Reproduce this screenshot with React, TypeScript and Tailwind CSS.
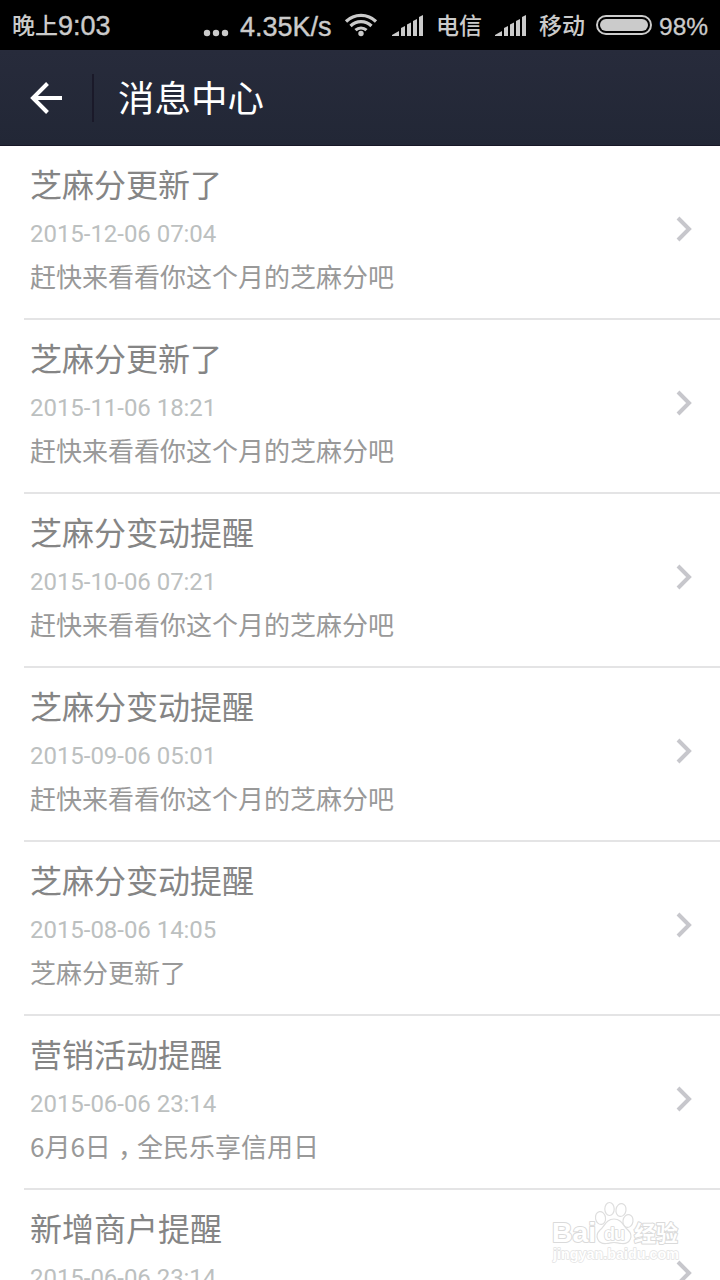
import React from 'react';

interface Message {
  title: string;
  time: string;
  body: React.ReactNode;
}

const reminder = '赶快来看看你这个月的芝麻分吧';

const messages: Message[] = [
  { title: '芝麻分更新了', time: '2015-12-06 07:04', body: reminder },
  { title: '芝麻分更新了', time: '2015-11-06 18:21', body: reminder },
  { title: '芝麻分变动提醒', time: '2015-10-06 07:21', body: reminder },
  { title: '芝麻分变动提醒', time: '2015-09-06 05:01', body: reminder },
  { title: '芝麻分变动提醒', time: '2015-08-06 14:05', body: '芝麻分更新了' },
  {
    title: '营销活动提醒',
    time: '2015-06-06 23:14',
    body: (
      <>
        6月6日
        <span className="mr-[6px] ml-[7px] inline-block w-[13px] [font-feature-settings:'halt']">，</span>
        全民乐享信用日
      </>
    ),
  },
  { title: '新增商户提醒', time: '2015-06-06 23:14', body: '' },
];

const SignalIcon: React.FC = () => (
  <svg className="h-[22px] w-[31px] shrink-0" viewBox="0 0 31 22" fill="#cbcbcb">
    <path d="M0 22v-1l7-4v5z" />
    <path d="M9 22v-8l4-2v10z" />
    <path d="M15 22V10.500l4-2V22z" />
    <path d="M21 22V7l4-2v17z" />
    <path d="M27 22V3l4-2v21z" />
  </svg>
);

const WifiIcon: React.FC = () => (
  <svg className="h-[24px] w-[34px] shrink-0" viewBox="0 0 34 24" fill="none" stroke="#cbcbcb" strokeWidth="3.200">
    <path d="M2 8.500a21.500 21.500 0 0 1 30 0" />
    <path d="M6.500 13a15 15 0 0 1 21 0" />
    <path d="M11.500 17.200a8 8 0 0 1 11 0" />
    <circle cx="17" cy="20.500" r="2.700" fill="#cbcbcb" stroke="none" />
  </svg>
);

const StatusBar: React.FC = () => (
  <div className="flex h-[50px] shrink-0 items-center bg-black pl-3 font-['Liberation_Sans','Noto_Sans_CJK_SC',sans-serif] text-[24px] leading-[50px] whitespace-nowrap text-[#cbcbcb]">
    <div className="flex w-[191px] items-center">
      <span className="pt-[2px] text-[23px] font-medium">晚上</span>
      <span className="pt-[2px] text-[27px] [-webkit-text-stroke:0.4px_#cbcbcb]">9:03</span>
    </div>
    <svg className="mt-4 h-[8px] w-[26px] shrink-0" viewBox="0 0 26 8" fill="#cbcbcb">
      <circle cx="4" cy="4" r="3.200" />
      <circle cx="13" cy="4" r="3.200" />
      <circle cx="22" cy="4" r="3.200" />
    </svg>
    <span className="ml-[11px] w-[104px] pt-[3px] text-[27px] [-webkit-text-stroke:0.4px_#cbcbcb]">4.35K/s</span>
    <WifiIcon />
    <div className="ml-[14px] flex"><SignalIcon /></div>
    <span className="ml-[13px] w-[59px] pt-[2px] text-[23px] font-medium">电信</span>
    <SignalIcon />
    <span className="ml-[13px] w-[57px] pt-[2px] text-[23px] font-medium">移动</span>
    <div className="h-5 w-14 shrink-0 rounded-full border-2 border-[#cbcbcb] p-[2px]">
      <div className="h-full rounded-full bg-[#cbcbcb]" />
    </div>
    <span className="ml-[7px] pt-[3px] text-[24.500px] [-webkit-text-stroke:0.3px_#cbcbcb]">98%</span>
  </div>
);

const Header: React.FC = () => (
  <header className="flex h-24 shrink-0 items-center border-b border-[#171727] bg-linear-to-b from-[#272b3b] to-[#222736] text-white">
    <svg className="ml-[30px] h-8 w-8" viewBox="0 0 32 32" fill="none" stroke="currentColor" strokeWidth="4">
      <path d="M17.500 1.500 3 16l14.500 14.500M3 16h29" />
    </svg>
    <div className="ml-[30px] h-12 w-[2px] bg-[#1a1929]" />
    <h1 className="ml-[24px] pb-[2px] text-[36.500px] leading-[48px]">消息中心</h1>
  </header>
);

const MessageRow: React.FC<{ message: Message }> = ({ message }) => (
  <li className="ml-6 flex h-[174px] shrink-0 items-start justify-between border-b-2 border-[#e4e4e5] pl-[6px]">
    <div className="pt-[14px]">
      <h2 className="text-[32px] leading-[46px] text-[#858585]">{message.title}</h2>
      <p className="mt-[10px] font-['Roboto',sans-serif] text-[24px] leading-[36px] tracking-[-0.04px] text-[#bcc0c0]">
        {message.time}
      </p>
      <p className="mt-[4px] text-[26px] leading-[40px] text-[#999]">{message.body}</p>
    </div>
    <svg className="mt-[69px] mr-[27px] h-7 w-[18px]" viewBox="0 0 18 28" fill="none" stroke="#c7c7cc" strokeWidth="4">
      <path d="M3 3 14 14 3 25" />
    </svg>
  </li>
);

const Watermark: React.FC = () => (
  <div className="absolute top-[1200px] left-[550px]">
    <svg className="h-[66px] w-[134px]" viewBox="0 0 134 66" fill="#fff" stroke="#dedede" strokeWidth="1.200">
      <ellipse cx="59.500" cy="9" rx="4.700" ry="6.500" />
      <ellipse cx="71" cy="10" rx="5" ry="6.500" transform="rotate(10 71 10)" />
      <ellipse cx="50.500" cy="18" rx="5" ry="6.500" transform="rotate(-10 50.500 18)" />
      <ellipse cx="78" cy="21" rx="5" ry="6.500" transform="rotate(10 78 21)" />
      <path d="M64 19c8 0 9 7 14 11 6 6 2 14-6 13.500-4 0-5-1-8-1s-4 1-8 1c-8 .500-12-7.500-6-13.500 5-4 6-11 14-11z" />
      <g
        className="font-['Liberation_Sans','Noto_Sans_CJK_SC',sans-serif] font-bold"
        paintOrder="stroke"
        stroke="#dadada"
        strokeWidth="2"
        strokeLinejoin="round"
      >
        <text x="2" y="42" fontSize="28" textLength="44" lengthAdjust="spacingAndGlyphs">Bai</text>
        <text x="54" y="40" fontSize="18" textLength="21" strokeWidth="1.600">du</text>
        <text x="84" y="41" fontSize="22" textLength="44">经验</text>
        <text x="3" y="59" fontSize="15" textLength="126" lengthAdjust="spacingAndGlyphs" stroke="#e2e2e2" strokeWidth="1.400">
          jingyan.baidu.com
        </text>
      </g>
    </svg>
  </div>
);

const App: React.FC = () => {
  return (
    <div className="relative flex h-[1280px] w-[720px] flex-col overflow-hidden bg-white font-['Noto_Sans_CJK_SC',sans-serif]">
      <StatusBar />
      <Header />
      <ul className="flex flex-col">
        {messages.map((message, index) => (
          <MessageRow key={index} message={message} />
        ))}
      </ul>
      <Watermark />
    </div>
  );
};

export default App;
